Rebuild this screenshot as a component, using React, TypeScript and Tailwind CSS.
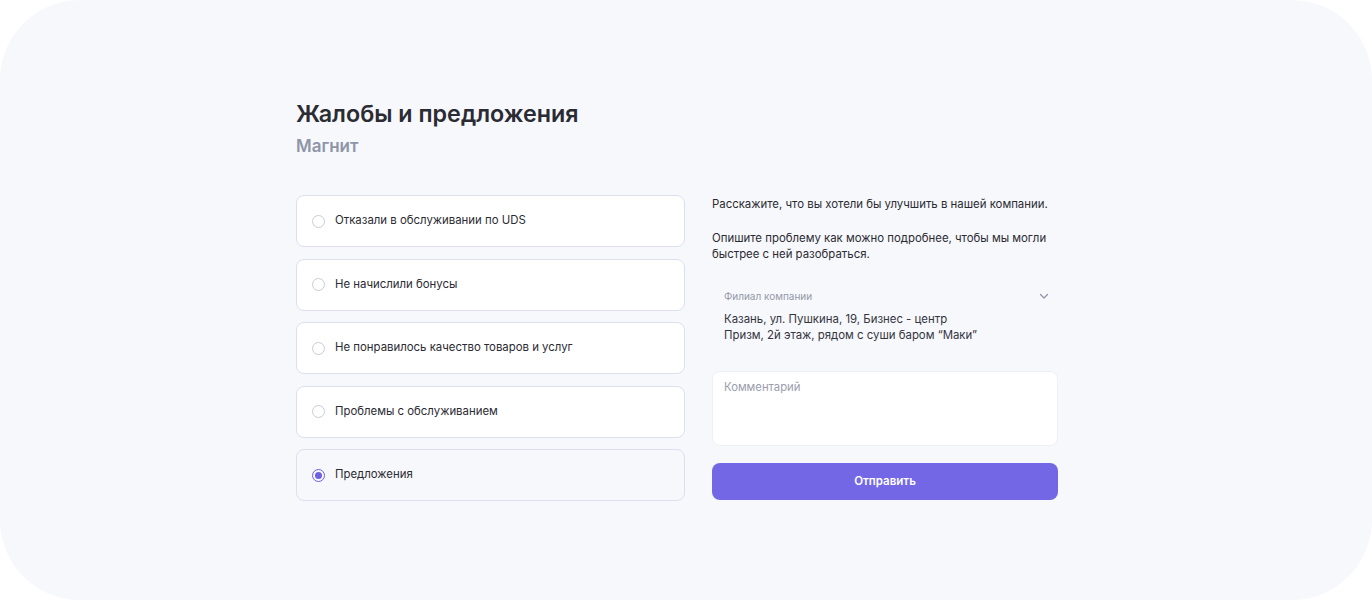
import React, { useState } from 'react';

const options = [
  'Отказали в обслуживании по UDS',
  'Не начислили бонусы',
  'Не понравилось качество товаров и услуг',
  'Проблемы с обслуживанием',
  'Предложения',
];

const App = () => {
  const [selected, setSelected] = useState(4);

  return (
    <div className="w-[1372px] h-[600px] bg-white font-['Inter',sans-serif]">
      <div className="w-full h-full rounded-[80px] bg-[#f7f8fc] pl-[296px] pt-[98px]">
        <h1 className="text-[23.3px] leading-[32px] font-semibold text-[#2b2b33]">Жалобы и предложения</h1>
        <h2 className="mt-[4px] text-[17px] leading-[24px] font-semibold text-[#8f95a8]">Магнит</h2>

        <div className="mt-[37px] flex gap-[27px]">
          <div className="w-[389px] flex flex-col gap-[11.5px]">
            {options.map((label, i) => {
              const active = i === selected;
              return (
                <button
                  key={label}
                  type="button"
                  onClick={() => setSelected(i)}
                  className={
                    active
                      ? 'h-[52px] flex items-center gap-[10px] px-[15px] rounded-[8px] border border-[#dedfee] bg-[#f7f8fc] text-left'
                      : 'h-[52px] flex items-center gap-[10px] px-[15px] rounded-[8px] border border-[#dedfee] bg-white text-left'
                  }
                >
                  {active ? (
                    <span className="w-[13px] h-[13px] rounded-full border-[1.5px] border-[#6f60e0] flex items-center justify-center">
                      <span className="w-[7px] h-[7px] rounded-full bg-[#6f60e0]" />
                    </span>
                  ) : (
                    <span className="w-[13px] h-[13px] rounded-full border-[1.5px] border-[#c9cbd6]" />
                  )}
                  <span className="text-[11.4px] text-[#2b2b33]">{label}</span>
                </button>
              );
            })}
          </div>

          <div className="w-[346px] flex flex-col">
            <p className="mt-[1px] text-[11.4px] leading-[16px] text-[#2b2b33]">
              Расскажите, что вы хотели бы улучшить в нашей компании.
            </p>
            <p className="mt-[18px] text-[11.4px] leading-[16px] text-[#2b2b33]">
              Опишите проблему как можно подробнее, чтобы мы могли
              <br />
              быстрее с ней разобраться.
            </p>

            <div className="mt-[27px] pl-[12px] pr-[8px] flex flex-col">
              <div className="flex items-center justify-between">
                <span className="text-[10px] leading-[14px] text-[#9499a8]">Филиал компании</span>
                <svg width="12" height="12" viewBox="0 0 12 12" fill="none">
                  <path d="M2.5 4.5L6 8L9.5 4.5" stroke="#8f95a8" strokeWidth="1.2" strokeLinecap="round" strokeLinejoin="round" />
                </svg>
              </div>
              <p className="mt-[8px] text-[11.4px] leading-[16px] text-[#34343c]">
                Казань, ул. Пушкина, 19, Бизнес - центр
                <br />
                Призм, 2й этаж, рядом с суши баром “Маки”
              </p>
            </div>

            <div className="mt-[28px] h-[75px] rounded-[8px] border border-[#eef0f6] bg-white px-[11px] pt-[7px] text-[11.3px] leading-[16px] text-[#9a9eae]">
              Комментарий
            </div>

            <button
              type="button"
              className="mt-[17px] h-[37px] rounded-[8px] bg-[#7367e5] text-white text-[11.5px] font-semibold"
            >
              Отправить
            </button>
          </div>
        </div>
      </div>
    </div>
  );
};

export default App;
